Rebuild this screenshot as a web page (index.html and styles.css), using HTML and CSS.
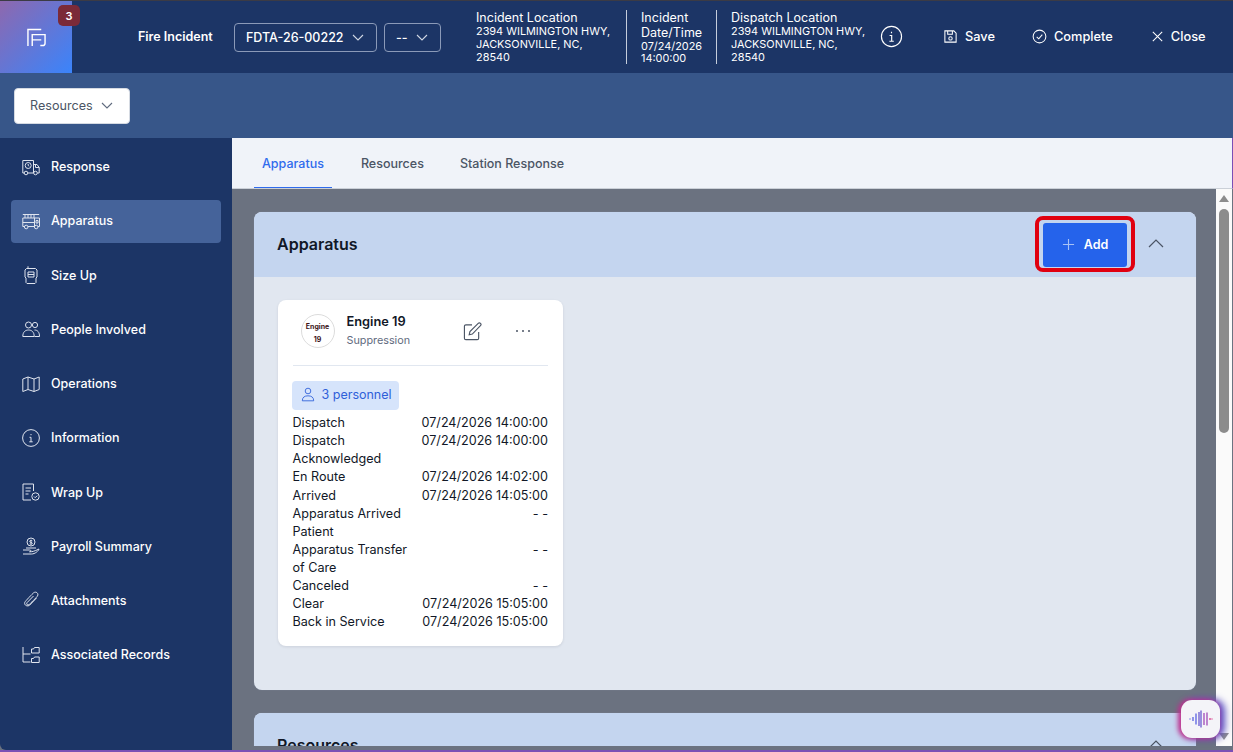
FILE: index.html
```html
<!DOCTYPE html>
<html lang="en">
<head>
<meta charset="utf-8">
<title>Fire Incident</title>
<link rel="stylesheet" href="styles.css">
</head>
<body>
<div class="app">
  <header class="topbar">
    <div class="logo">
      <svg class="logo-icon" viewBox="0 0 20 20" fill="none" stroke="#fff" stroke-width="1.500"><path d="M1 19V1.500h14M5.500 19V7H19v9a2.500 2.500 0 0 1-2.500 2.500H14M5.500 12.500H15"/></svg>
      <span class="badge">3</span>
    </div>
    <div class="title">Fire Incident</div>
    <button class="sel sel-id">FDTA-26-00222<svg class="chev" viewBox="0 0 12 7"><path d="M1 1l5 5 5-5"/></svg></button>
    <button class="sel sel-dash">--<svg class="chev" viewBox="0 0 12 7"><path d="M1 1l5 5 5-5"/></svg></button>
    <div class="info info-a"><b>Incident Location</b><span>2394 WILMINGTON HWY, JACKSONVILLE, NC, 28540</span></div>
    <div class="info info-b"><b>Incident Date/Time</b><span>07/24/2026 14:00:00</span></div>
    <div class="info info-c"><b>Dispatch Location</b><span>2394 WILMINGTON HWY, JACKSONVILLE, NC, 28540</span></div>
    <svg class="i-info" viewBox="0 0 24 24" fill="none" stroke="#fff" stroke-width="1.200"><circle cx="12" cy="12" r="10.500"/><path d="M12 7v1.500M10 11h2.200v6M9.800 17h4.600"/></svg>
    <div class="act act-save"><svg viewBox="0 0 16 16" fill="none" stroke="#fff" stroke-width="1.100"><path d="M2 2h9.500L14 4.500V14H2zM5 2v3.500h5V2"/><circle cx="8" cy="10" r="1.800"/></svg>Save</div>
    <div class="act act-complete"><svg viewBox="0 0 16 16" fill="none" stroke="#fff" stroke-width="1.100"><circle cx="8" cy="8" r="6.800"/><path d="M5 8.300l2.200 2.200L11 6"/></svg>Complete</div>
    <div class="act act-close"><svg viewBox="0 0 16 16" fill="none" stroke="#fff" stroke-width="1.100"><path d="M3 3l10 10M13 3L3 13"/></svg>Close</div>
  </header>
  <div class="subbar">
    <button class="res-btn">Resources<svg class="chev" viewBox="0 0 12 7"><path d="M1 1l5 5 5-5"/></svg></button>
  </div>
  <div class="body">
    <nav class="side">
      <a class="nav"><svg viewBox="0 0 18 18"><path d="M11.500 15H6M2 15H.8V2.500h10.700V15M11.500 6.500H15l2.200 3V15h-1.700M13.500 6.500V9.500h3.700"/><circle cx="4" cy="15" r="1.800"/><circle cx="13.500" cy="15" r="1.800"/><circle cx="6.200" cy="7.500" r="3"/><path d="M6.200 6v1.500l1 .7"/></svg>Response</a>
      <a class="nav active"><svg viewBox="0 0 18 18"><path d="M.8 2.500h16.400M.8 6h16.700v8.500H16M.8 6v8.500h1.700M6 14.500h6.500M.8 10.500h11.700M3 2.500V6M6 2.500V6M9 2.500V6M12 2.500V6M12.500 6v8.500M14 8.500h2v2.500h-2z"/><circle cx="4.200" cy="15" r="1.800"/><circle cx="14.200" cy="15" r="1.800"/></svg>Apparatus</a>
      <a class="nav"><svg viewBox="0 0 18 18"><path d="M6 2.500V.3M4.500 2.500h9L15 4v7l-1 1v4.500l-1 1H5l-1-1V12l-1-1V4zM6 6h6v5H6zM6 8.500h6"/></svg>Size Up</a>
      <a class="nav"><svg viewBox="0 0 18 18"><circle cx="6.500" cy="5" r="3"/><circle cx="13" cy="5" r="2.600"/><path d="M.8 16.500c0-4.500 2.500-6.500 5.700-6.500s5.700 2 5.700 6.500zM12.500 10c3 0 5 2 5 6.500h-5"/></svg>People Involved</a>
      <a class="nav"><svg viewBox="0 0 18 18"><path d="M.8 4l5.200-2 6 2 5.200-2v12.500L12 16.500l-6-2-5.200 2zM6 2v12.500M12 4v12.500"/></svg>Operations</a>
      <a class="nav"><svg viewBox="0 0 18 18"><circle cx="9" cy="9" r="8.400"/><path d="M9 5v1.200M7.500 8.300H9v4.500M7.300 12.800h3.400"/></svg>Information</a>
      <a class="nav"><svg viewBox="0 0 18 18"><path d="M9 17H1V1h10.500v7M3.500 5h5.500M3.500 8h5M3.500 11h3"/><circle cx="13.500" cy="13.500" r="3.700"/><path d="M12 13.500l1.200 1.200 2-2"/></svg>Wrap Up</a>
      <a class="nav"><svg viewBox="0 0 18 18"><circle cx="9" cy="5" r="4"/><path d="M9 2.800v4.400M10.300 3.800c-1-.8-2.600-.4-2.600.6 0 1.300 2.600.7 2.600 2 0 1-1.700 1.200-2.600.5M4 11h10M1 13h6.500c2 0 2 1.800 0 1.800M7.500 14.800c2.500 0 4.500-.3 9.500-2.800-.5 2-4 5-7.500 5H1"/></svg>Payroll Summary</a>
      <a class="nav"><svg viewBox="0 0 18 18"><path d="M14.500 7l-6.700 7c-2 2-6 .5-5-2.700.3-1 8-8.800 8.700-9.400 2.500-2 5.500.5 4 3.100-.7 1.100-7.500 8-8.500 8.700-1.500 1-3-.5-2-2l6.500-6.700"/></svg>Attachments</a>
      <a class="nav"><svg viewBox="0 0 18 18"><path d="M1 1v15h7.500M1 8h7.500M9.500 3h2l1-1.500h4.700V7H9.500zM9.500 12.500h2l1-1.500h4.700v5.500H9.500z"/></svg>Associated Records</a>
    </nav>
    <div class="work">
      <div class="tabs">
        <span class="tab current">Apparatus</span>
        <span class="tab">Resources</span>
        <span class="tab">Station Response</span>
      </div>
      <div class="pane">
        <main class="scroll">
          <section class="panel">
            <div class="panel-head">
              <h2>Apparatus</h2>
              <div class="highlight"><button class="add"><svg viewBox="0 0 14 14"><path d="M7 1v12M1 7h12"/></svg>Add</button></div>
              <svg class="collapse" viewBox="0 0 16 9"><path d="M1 8l7-7 7 7"/></svg>
            </div>
            <div class="panel-body">
              <article class="card">
                <div class="card-head">
                  <div class="avatar"><span>Engine</span><span>19</span></div>
                  <div class="who"><strong>Engine 19</strong><small>Suppression</small></div>
                  <svg class="edit" viewBox="0 0 20 20"><path d="M9.500 3H3a1.500 1.500 0 0 0-1.500 1.500V17A1.500 1.500 0 0 0 3 18.500h12a1.500 1.500 0 0 0 1.500-1.500v-6.500M6.500 13.500l.8-3.500 8.700-8.500a1.500 1.500 0 0 1 2.400 2.400L9.800 12.700z"/></svg>
                  <div class="more"><i></i><i></i><i></i></div>
                </div>
                <div class="pill"><svg viewBox="0 0 16 16"><circle cx="8" cy="4" r="3.200"/><path d="M1.500 15.200c0-4 2.500-5.700 6.500-5.700s6.500 1.700 6.500 5.700z"/></svg>3 personnel</div>
                <dl class="times">
                  <dt>Dispatch</dt><dd>07/24/2026 14:00:00</dd>
                  <dt>Dispatch Acknowledged</dt><dd>07/24/2026 14:00:00</dd>
                  <dt>En Route</dt><dd>07/24/2026 14:02:00</dd>
                  <dt>Arrived</dt><dd>07/24/2026 14:05:00</dd>
                  <dt>Apparatus Arrived Patient</dt><dd>- -</dd>
                  <dt>Apparatus Transfer of Care</dt><dd>- -</dd>
                  <dt>Canceled</dt><dd>- -</dd>
                  <dt>Clear</dt><dd>07/24/2026 15:05:00</dd>
                  <dt>Back in Service</dt><dd>07/24/2026 15:05:00</dd>
                </dl>
              </article>
            </div>
          </section>
          <section class="panel second">
            <div class="panel-head">
              <h2>Resources</h2>
              <svg class="collapse" viewBox="0 0 16 9"><path d="M1 8l7-7 7 7"/></svg>
            </div>
          </section>
        </main>
        <div class="scrollbar">
          <span class="arrow up"></span>
          <span class="thumb"></span>
          <span class="arrow down"></span>
        </div>
      </div>
    </div>
  </div>
  <div class="voice">
    <svg viewBox="0 0 24 18"><path class="v1" d="M1 8.500v1M4 7v4M7 3.500v11"/><path class="v2" d="M10 2v14M12 .5v17"/><path class="v3" d="M15 3v12M18 2.500v13"/><path class="v4" d="M21 8v2M23 8.500v1"/></svg>
  </div>
</div>
</body>
</html>
```
FILE: styles.css
```css
* { box-sizing: border-box; }
html, body { margin: 0; height: 100%; overflow: hidden; }
body { font-family: Inter, "Liberation Sans", sans-serif; background: #6b7280; }
.app { position: relative; width: 1233px; height: 752px; display: flex; flex-direction: column; overflow: hidden; border-top: 1px solid #3b3b45; border-bottom: 2px solid #7a4fb5; background: #6b7280; }

.topbar { height: 72px; flex: none; display: flex; align-items: center; background: #1c3566; color: #fff; }
.logo { position: relative; width: 72px; height: 72px; flex: none; background: linear-gradient(135deg, #8e68ae 0%, #3a84fb 100%); display: flex; align-items: center; justify-content: center; }
.logo-icon { width: 19px; height: 19px; margin-top: 1px; }
.badge { position: absolute; left: 58px; top: 4px; width: 22px; height: 21px; background: #7b2a38; border-radius: 5px; font-size: 11px; font-weight: 600; display: flex; align-items: center; justify-content: center; }
.title { width: 162px; padding: 0 0 1px 66px; font-size: 12.500px; font-weight: 600; white-space: nowrap; }
.sel { height: 29px; display: flex; align-items: center; background: transparent; border: 1px solid #8b9ab8; border-radius: 4px; color: #fff; font: 500 12.500px Inter, sans-serif; padding: 0 12px 0 11px; justify-content: space-between; }
.sel .chev { stroke: #d0d7e4; }
.chev { width: 12px; height: 7px; fill: none; stroke: #5f6b7e; stroke-width: 1.100; flex: none; }
.sel-id { width: 143px; }
.sel-dash { width: 57px; margin-left: 7px; }
.info { display: flex; flex-direction: column; font-size: 10.900px; line-height: 12.800px; height: 54px; }
.info b { font-size: 12.500px; font-weight: 400; line-height: 15px; }
.info-a { width: 151px; margin-left: 35px; padding-right: 12px; border-right: 1px solid #c5cddc; }
.info-b { width: 90px; padding-left: 14px; padding-right: 10px; border-right: 1px solid #c5cddc; margin-top: -1px; }
.info-c { width: 150px; padding-left: 14px; padding-right: 0; }
.i-info { width: 23px; height: 23px; margin: 0 0 2px 13px; flex: none; }
.act { display: flex; align-items: center; gap: 7px; font-size: 12.800px; font-weight: 500; margin-bottom: 2px; }
.act svg { width: 15px; height: 15px; }
.act-save { margin-left: 40px; }
.act-complete { margin-left: 37px; }
.act-close { margin-left: 37px; gap: 6px; }

.subbar { height: 65px; flex: none; background: #375689; display: flex; align-items: center; padding-left: 14px; }
.res-btn { width: 116px; height: 36px; background: #fff; border: 1px solid #d5dae2; border-radius: 4px; color: #4b5565; font: 400 12.600px Inter, sans-serif; display: flex; align-items: center; gap: 8px; padding: 0 15px; }

.body { flex: 1; min-height: 0; display: flex; }
.side { width: 232px; flex: none; background: #1c3566; padding-top: 1.800px; display: flex; flex-direction: column; border-bottom-left-radius: 6px; }
.nav { height: 54.200px; display: flex; align-items: center; gap: 11px; color: #fff; font-size: 12.500px; font-weight: 500; margin: 0 11px; padding-left: 11px; border-radius: 4px; }
.nav svg { width: 18px; height: 18px; fill: none; stroke: #dfe4ee; stroke-width: 1; flex: none; }
.nav.active { background: #45639a; height: 43px; margin-top: 5.600px; margin-bottom: 5.600px; padding-bottom: 1px; }

.work { flex: 1; min-width: 0; display: flex; flex-direction: column; padding-bottom: 4px; }
.tabs { height: 51px; flex: none; background: #f0f3f9; border-bottom: 1px solid #cbd0d8; border-right: 1px solid #7a4fb5; display: flex; padding-left: 22px; gap: 22px; }
.tab { height: 50px; padding: 0 8px; display: flex; align-items: center; font-size: 12.500px; font-weight: 500; color: #4b5565; }
.tab + .tab { padding: 0 7px; }
.tab.current { color: #2f6bed; border-bottom: 1px solid #2f6bed; padding-top: 1px; }
.pane { flex: 1; min-height: 0; display: flex; }
.scroll { flex: 1; min-width: 0; padding: 23px 20px 0 22px; overflow: hidden; background: #6b7280; }
.panel { border-radius: 8px; background: #e1e7f0; overflow: hidden; box-shadow: 0 0 1px #8a96aa; }
.panel-head { height: 65px; padding-bottom: 1px; background: #c4d5ef; display: flex; align-items: center; padding-left: 23px; }
.panel-head h2 { margin: 0; flex: 1; font-size: 16px; font-weight: 600; color: #111827; }
.highlight { border: 4px solid #e00010; border-radius: 8px; padding: 3px 4px 1px; display: flex; margin-right: 13px; width: 100px; height: 56px; background: #c4d5ef; }
.add { flex: 1; border: 0; border-radius: 3px; padding: 0 0 2px; background: #2563eb; color: #fff; font: 600 12.500px Inter, sans-serif; display: flex; align-items: center; justify-content: center; gap: 9px; }
.add svg { width: 13px; height: 13px; fill: none; stroke: #a8c2f5; stroke-width: 1.200; }
.collapse { width: 16px; height: 9px; fill: none; stroke: #4b5565; stroke-width: 1.200; margin: 0 32px 2px 0; flex: none; }
.panel-body { height: 413px; padding: 23px 24px; }
.second { margin-top: 23px; }
.card { width: 284.500px; height: 346px; background: #fff; border-radius: 8px; padding: 0 14.500px; box-shadow: 0 1px 3px rgba(15, 23, 42, .1); }
.card-head { height: 66px; padding-bottom: 3px; display: flex; align-items: center; border-bottom: 1px solid #e1e7f0; }
.avatar { width: 34px; height: 34px; margin-left: 8px; padding-top: 3px; flex: none; border: 1px solid #dcdcdc; border-radius: 50%; display: flex; flex-direction: column; align-items: center; justify-content: center; gap: 6px; font-size: 7px; line-height: 7px; font-weight: 700; color: #3c1418; }
.who { margin-left: 12px; margin-bottom: 1px; width: 116px; display: flex; flex-direction: column; gap: 4px; }
.who strong { font-size: 12.800px; line-height: 16px; font-weight: 600; color: #111827; }
.who small { font-size: 10.800px; line-height: 14px; color: #5f6b7e; }
.edit { width: 19px; height: 19px; fill: none; stroke: #4b5565; stroke-width: 1.200; flex: none; }
.more { margin-left: 34px; display: flex; gap: 4px; }
.more i { width: 2px; height: 2px; border-radius: 50%; background: #4b5565; }
.pill { width: 107px; height: 29px; margin: 15px 0 0 -.5px; background: #d6e4fb; border-radius: 4px; display: flex; align-items: center; gap: 7px; padding: 0 0 2px 8.500px; color: #2f60d9; font-size: 12.500px; }
.pill svg { width: 14px; height: 15px; fill: none; stroke: #2f60d9; stroke-width: 1; flex: none; }
.times { margin: 4.200px 0 0; display: grid; grid-template-columns: 118px 1fr; font-size: 12.600px; line-height: 18.100px; color: #111827; }
.times dt { grid-column: 1; }
.times dd { margin: 0; text-align: right; white-space: nowrap; }

.scrollbar { width: 16px; flex: none; margin-right: 1px; background: #fafafa; display: flex; flex-direction: column; align-items: center; padding: 6px 0; }
.thumb { width: 10px; height: 224px; margin-top: 7px; background: #8c8c8c; border-radius: 5px; }
.arrow { width: 0; height: 0; border-left: 5.500px solid transparent; border-right: 5.500px solid transparent; }
.arrow.up { border-bottom: 7px solid #8c8c8c; }
.arrow.down { margin-top: auto; border-top: 7px solid #8c8c8c; }

.voice { position: absolute; left: 1181px; top: 699px; width: 39px; height: 38px; border-radius: 11px; background: #f4f4f8; box-shadow: -2px 0 5px 1px #c0308c, 4px 0 7px 1px #5a4fc4; display: flex; align-items: center; justify-content: center; }
.voice svg { width: 24px; height: 18px; fill: none; stroke-width: 1.300; }
.v1 { stroke: #5a63e0; }
.v2 { stroke: #6a5ad0; }
.v3 { stroke: #a04ab8; }
.v4 { stroke: #d8408c; }
```
